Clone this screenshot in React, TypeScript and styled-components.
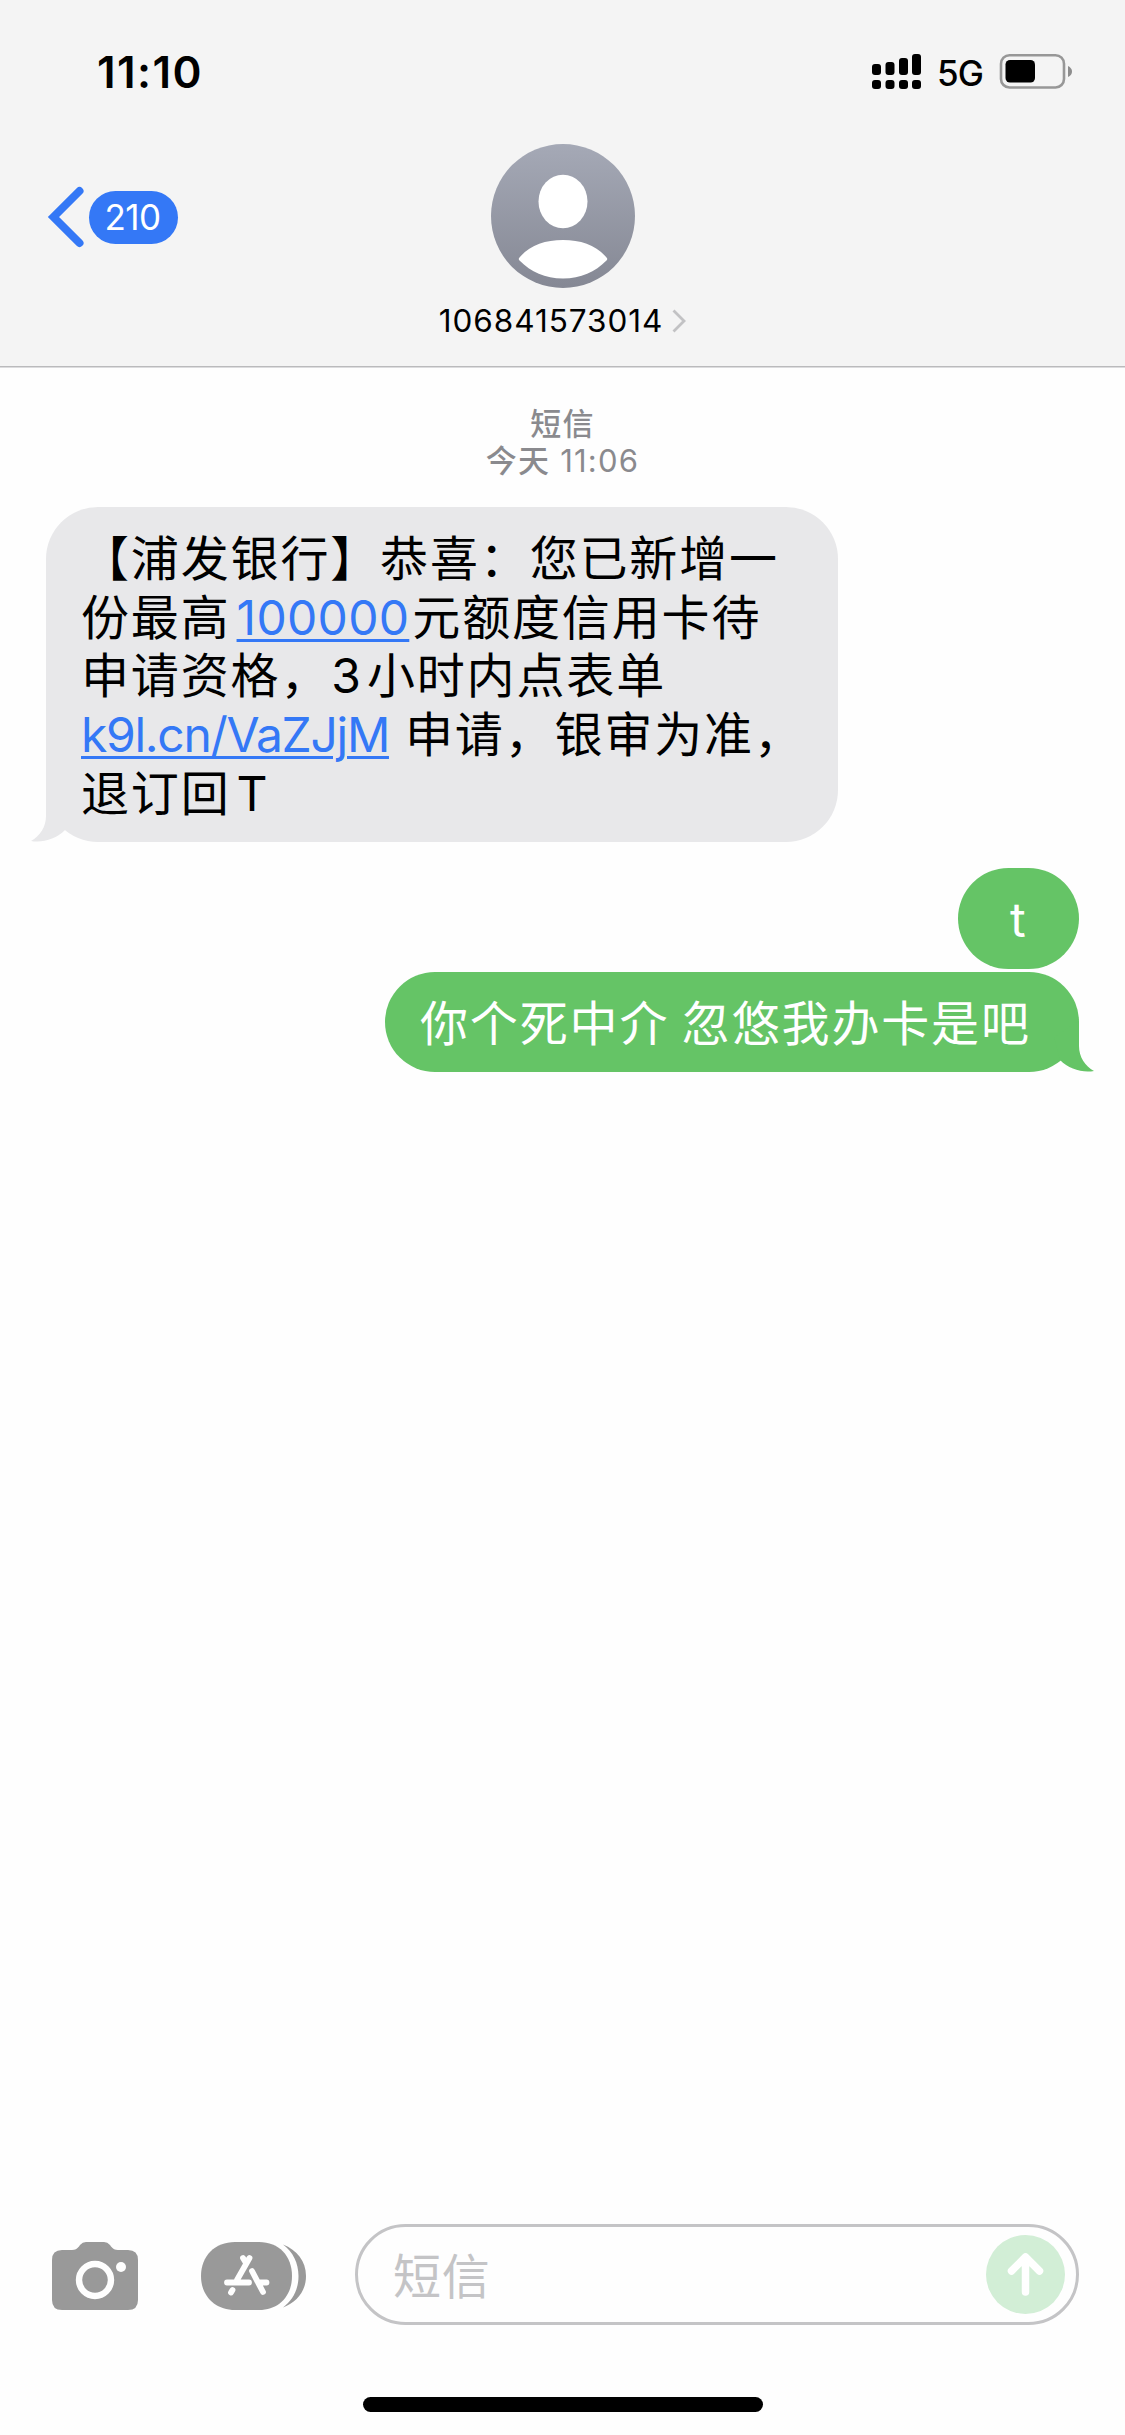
import React from 'react';
import styled, { createGlobalStyle } from 'styled-components';

const BLUE = '#3478f6';
const GREEN = '#65c466';
const GREY = '#e8e8ea';

const GlobalStyle = createGlobalStyle`
  html, body { margin: 0; padding: 0; background: #fefefe; }
  * { box-sizing: border-box; }
  svg { display: block; flex: none; }
`;

const Screen = styled.div`
  width: 1125px;
  height: 2435px;
  display: flex;
  flex-direction: column;
  background: #fefefe;
  overflow: hidden;
  color: #000;
  font-family: Inter, 'Noto Sans CJK SC', sans-serif;
`;

const Header = styled.header`
  height: 367px;
  flex: none;
  background: #f4f4f4;
  border-bottom: 1px solid #bababc;
  box-shadow: 0 1px 0 #dcdcde;
`;

const StatusBar = styled.div`
  height: 144px;
  padding: 0 53px 0 97px;
  display: flex;
  justify-content: space-between;
  align-items: flex-start;
`;

const Clock = styled.time`
  margin-top: 46px;
  font-size: 44px;
  line-height: 52px;
  font-weight: 600;
  letter-spacing: 1.4px;
`;

const StatusIcons = styled.div`
  display: flex;
  align-items: center;
  height: 36px;
  margin-top: 53px;
`;

const Network = styled.span`
  width: 62px;
  padding-left: 14px;
  padding-top: 3px;
  font-size: 35px;
  line-height: 36px;
  font-weight: 500;
  white-space: nowrap;
  letter-spacing: -0.8px;
`;

const NavBar = styled.nav`
  display: grid;
  grid-template-columns: 300px 1fr 300px;
`;

const Back = styled.button`
  display: flex;
  align-items: center;
  gap: 5px;
  height: 62px;
  margin: 42px 0 0 47px;
  padding: 0;
  border: 0;
  background: none;
`;

const Unread = styled.span`
  width: 89px;
  height: 53px;
  padding-right: 2px;
  border-radius: 27px;
  background: ${BLUE};
  color: #fff;
  font: 400 35px/52px Inter, sans-serif;
  letter-spacing: -0.6px;
  text-align: center;
`;

const Contact = styled.div`
  display: flex;
  flex-direction: column;
  align-items: center;
`;

const ContactName = styled.div`
  display: flex;
  align-items: center;
  gap: 9px;
  margin-top: 12px;
  font-size: 31.5px;
  line-height: 42px;
  letter-spacing: 0.95px;
`;

const Thread = styled.main`
  flex: 1;
  display: flex;
  flex-direction: column;
  padding: 35.5px 46px 0;
`;

const Stamp = styled.div`
  align-self: center;
  display: flex;
  flex-direction: column;
  align-items: center;
  color: #8a8a8e;
  font-size: 31px;
  line-height: 38px;
`;

const StampLine = styled.span`
  height: 37.5px;
  letter-spacing: 1.2px;
  white-space: pre;
`;

const Han = styled.span`
  font-family: 'Noto Sans CJK SC', sans-serif;
  font-weight: 500;
`;

const Bubble = styled.div<{ $sent?: boolean; $width: number; $gap: number }>`
  position: relative;
  align-self: ${(p) => (p.$sent ? 'flex-end' : 'flex-start')};
  width: ${(p) => p.$width}px;
  margin-top: ${(p) => p.$gap}px;
  padding: 19.4px 35px 22.6px;
  border-radius: ${(p) => (p.$sent ? 50.5 : 52)}px;
  background: ${(p) => (p.$sent ? GREEN : GREY)};
  color: ${(p) => (p.$sent ? '#fff' : '#000')};
  font-family: 'Noto Sans CJK SC', sans-serif;
  font-size: 48px;
  line-height: 58.7px;
  letter-spacing: 1.85px;
`;

const Line = styled.div`
  height: 58.7px;
  white-space: pre;
`;

const Latin = styled.span<{ $before?: number; $after?: number; $spacing?: number }>`
  font-family: Inter, sans-serif;
  line-height: 1;
  margin-left: ${(p) => p.$before ?? 0}px;
  margin-right: ${(p) => p.$after ?? 0}px;
  letter-spacing: ${(p) => p.$spacing ?? 0}px;
`;

const Link = styled(Latin).attrs({ as: 'a' })`
  color: ${BLUE};
  text-decoration: underline;
  text-decoration-thickness: 3px;
  text-underline-offset: 4px;
`;

const Tail = styled.svg<{ $sent?: boolean }>`
  position: absolute;
  bottom: 0;
  ${(p) => (p.$sent ? 'right: -15px; transform: scaleX(-1);' : 'left: -15px;')}
  fill: ${(p) => (p.$sent ? GREEN : GREY)};
`;

const Composer = styled.footer`
  flex: none;
  height: 101px;
  margin-bottom: 72px;
  padding: 0 46px 0 52px;
  display: flex;
  align-items: center;
`;

const CameraIcon = styled.svg`
  margin: 2px 63px 0 0;
`;

const AppsIcon = styled.svg`
  margin: 2px 49px 0 0;
`;

const Field = styled.div`
  flex: 1;
  height: 101px;
  border: 3px solid #c4c4c6;
  border-radius: 51px;
  padding: 0 11px 0 35px;
  display: flex;
  align-items: center;
  justify-content: space-between;
  color: #c4c4c6;
  font: 400 48px/60px 'Noto Sans CJK SC', sans-serif;
  letter-spacing: 0.7px;
`;

const Placeholder = styled.span`
  margin-top: -4px;
`;

const HomeBar = styled.div`
  flex: none;
  align-self: center;
  width: 400px;
  height: 15px;
  margin-bottom: 23px;
  border-radius: 8px;
  background: #000;
`;

const BubbleTail = ({ sent }: { sent?: boolean }) => (
  <Tail $sent={sent} width="50" height="60" viewBox="0 0 50 60">
    <path d="M15 9V34C15 45 9 54 0 59C12 61 25 57 34 48L40 25Z" />
  </Tail>
);

export default function App() {
  return (
    <Screen>
      <GlobalStyle />
      <Header>
        <StatusBar>
          <Clock>11:10</Clock>
          <StatusIcons>
            <svg width="51" height="36" viewBox="0 0 51 36">
              <rect x="0" y="11" width="9" height="11" rx="3" />
              <rect x="13.5" y="9" width="9" height="13" rx="3" />
              <rect x="27" y="5" width="9" height="17" rx="3" />
              <rect x="40" y="1" width="9" height="21" rx="3" />
              {[0, 13.5, 27, 40].map((x) => (
                <rect key={x} x={x} y="27" width="9" height="9" rx="3" />
              ))}
            </svg>
            <Network>5G</Network>
            <svg width="87" height="36" viewBox="0 0 87 36">
              <rect x="16" y="2.2" width="63" height="32.3" rx="8.5" fill="none" stroke="#979797" strokeWidth="2.6" />
              <rect x="20.5" y="7" width="29.5" height="22.5" rx="4.5" />
              <path d="M83 13Q87 15 87 18.500Q87 22 83 24Z" fill="#8d8d8d" />
            </svg>
          </StatusIcons>
        </StatusBar>
        <NavBar>
          <Back>
            <svg width="37" height="62" viewBox="0 0 37 62" fill="none" stroke={BLUE} strokeWidth="8" strokeLinecap="round" strokeLinejoin="miter">
              <path d="M32.500 5L6.500 31L32.500 57" />
            </svg>
            <Unread>210</Unread>
          </Back>
          <Contact>
            <svg width="144" height="144" viewBox="0 0 144 144">
              <defs>
                <linearGradient id="avatar" x1="0" y1="0" x2="0" y2="1">
                  <stop offset="0" stopColor="#a5a9b6" />
                  <stop offset="1" stopColor="#858894" />
                </linearGradient>
              </defs>
              <circle cx="72" cy="72" r="72" fill="url(#avatar)" />
              <ellipse cx="72" cy="57.500" rx="24.500" ry="26.700" fill="#fff" />
              <path d="M28.500 113.500C39 101 54 96 72 96S105 101 115.500 113.500Q117 115 115.500 116.500C104 128 90 134.500 72 134.500S40 128 28.500 116.500Q27 115 28.500 113.500Z" fill="#fff" />
            </svg>
            <ContactName>
              106841573014
              <svg width="14" height="24" viewBox="0 0 14 24" fill="none" stroke="#c2c2c4" strokeWidth="2.8">
                <path d="M1.500 1.500L12 12L1.500 22.500" />
              </svg>
            </ContactName>
          </Contact>
        </NavBar>
      </Header>

      <Thread>
        <Stamp>
          <StampLine><Han>短信</Han></StampLine>
          <StampLine><Han>今天</Han> 11:06</StampLine>
        </Stamp>
        <Bubble $width={792} $gap={29}>
          <Line>【浦发银行】恭喜：您已新增一</Line>
          <Line>份最高<Link $before={6} $after={3} $spacing={0.3}>100000</Link>元额度信用卡待</Line>
          <Line>申请资格，<Latin $before={1} $after={6}>3</Latin>小时内点表单</Line>
          <Line><Link $after={16} $spacing={-1.3}>k9l.cn/VaZJjM</Link>申请，银审为准，</Line>
          <Line>退订回<Latin $before={6}>T</Latin></Line>
          <BubbleTail />
        </Bubble>
        <Bubble $sent $width={121} $gap={26}>
          <Line><Latin $before={17}>t</Latin></Line>
        </Bubble>
        <Bubble $sent $width={694} $gap={3}>
          <Line>你个死中介 忽悠我办卡是吧</Line>
          <BubbleTail sent />
        </Bubble>
      </Thread>

      <Composer>
        <CameraIcon width="86" height="68" viewBox="0 0 86 68">
          <path fill="#999" d="M10 8H20C23 8 25 7 27 4.500L28 3Q30.500 0 34 0H52Q55.500 0 58 3L59 4.500C61 7 63 8 66 8H76Q86 8 86 18V58Q86 68 76 68H10Q0 68 0 58V18Q0 8 10 8Z" />
          <circle cx="43" cy="38" r="16" fill="none" stroke="#fefefe" strokeWidth="6.400" />
          <circle cx="69" cy="25" r="5" fill="#fefefe" />
        </CameraIcon>
        <AppsIcon width="105" height="68" viewBox="0 0 105 68">
          <path fill="#999" d="M34 0H58C78 0 91 14 91 34S78 68 58 68H34C14 68 0 54 0 34S14 0 34 0Z" />
          <path fill="#999" d="M82 2.500C96 8 105 19 105 34S96 60 82 65.500C92 58 97.500 47 97.500 34S92 10 82 2.500Z" />
          <g stroke="#fefefe" strokeWidth="5.800" strokeLinecap="round" fill="none">
            <path d="M48.500 16L36 38M42 16L45 21M51 29L62 50M26 40.500H48M58 40.500H65.500M31.500 48L30 50.500" />
          </g>
        </AppsIcon>
        <Field>
          <Placeholder>短信</Placeholder>
          <svg width="79" height="79" viewBox="0 0 79 79">
            <circle cx="39.500" cy="39.500" r="39.500" fill="#d2eed6" />
            <path d="M39.500 57V23M25.500 36L39.500 22L53.500 36" fill="none" stroke="#fff" strokeWidth="7.500" strokeLinecap="round" strokeLinejoin="round" />
          </svg>
        </Field>
      </Composer>
      <HomeBar />
    </Screen>
  );
}
